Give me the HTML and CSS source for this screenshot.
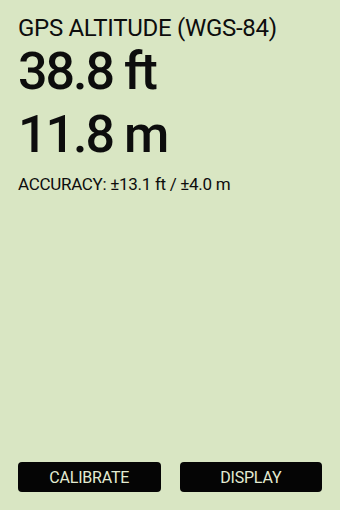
FILE: index.html
```html
<!DOCTYPE html>
<html lang="en">
<head>
    <meta charset="UTF-8">
    <meta name="viewport" content="width=device-width, initial-scale=1.0">
    <title>GPS Altitude</title>
    <link rel="stylesheet" href="styles.css">
</head>
<body>
    <main class="leitura">
        <h1 class="titulo">GPS ALTITUDE (WGS-84)</h1>
        <div class="valor">38.8 ft</div>
        <div class="valor">11.8 m</div>
        <p class="precisao">ACCURACY: ±13.1 ft / ±4.0 m</p>
    </main>
    <footer class="botoes">
        <button class="btn">CALIBRATE</button>
        <button class="btn">DISPLAY</button>
    </footer>
</body>
</html>
```

FILE: styles.css
```css
html, body {
    height: 100%;
}

body {
    font-family: Roboto, "Liberation Sans", sans-serif;
    margin: 0;
    padding: 0;
    display: flex;
    flex-direction: column;
    background-color: #d9e6c3;
    color: #0d0d0d;
}

.leitura {
    flex: 1;
    padding: 13px 18px 0 18px;
}

.titulo {
    font-size: 24px;
    font-weight: 400;
    letter-spacing: -0.3px;
    margin: 0;
    line-height: 30px;
}

.valor {
    font-size: 52px;
    font-weight: 500;
    letter-spacing: -2px;
    line-height: 63px;
    margin-top: -3px;
    margin-bottom: 3px;
}

.precisao {
    font-size: 17px;
    font-weight: 400;
    letter-spacing: -0.3px;
    margin: 8px 0 0 0;
}

.botoes {
    display: flex;
    gap: 19px;
    padding: 0 18px 18px 18px;
}

.btn {
    flex: 1;
    height: 30px;
    background-color: #050505;
    color: #e3ebd2;
    border: none;
    border-radius: 4px;
    font-family: Roboto, "Liberation Sans", sans-serif;
    font-size: 16px;
    font-weight: 400;
    letter-spacing: -0.2px;
}
```
